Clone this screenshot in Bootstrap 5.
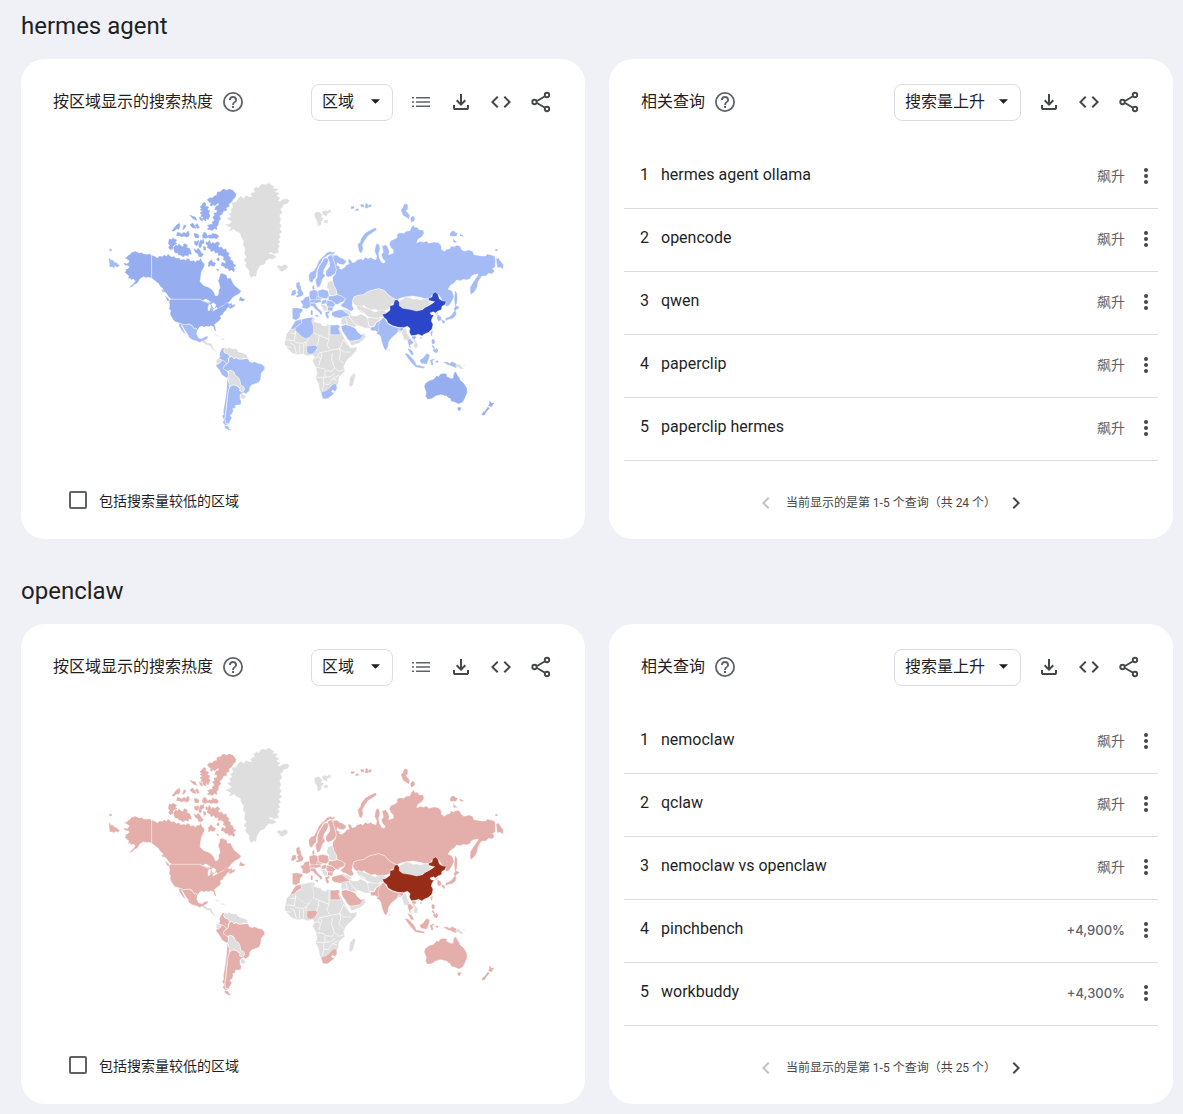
<!DOCTYPE html>
<html lang="zh-CN">
<head>
<meta charset="utf-8">
<meta name="viewport" content="width=device-width, initial-scale=1">
<title>搜索热度</title>
<link href="https://cdn.jsdelivr.net/npm/bootstrap@5.3.0/dist/css/bootstrap.min.css" rel="stylesheet">
<style>
body{background:#f0f1f7;color:#1f1f1f;font-family:Roboto,"Noto Sans CJK SC",sans-serif;font-size:16px;line-height:24px}
.page{padding:0 10px 10px 21px}
.topic{padding-top:10px}
.topic + .topic{margin-top:26px}
.topic-title{font-size:24px;line-height:32px;font-weight:400;margin-bottom:17px}
.panels{--bs-gutter-x:24px;--bs-gutter-y:24px}
.panel{border:0;border-radius:24px;min-height:480px;height:100%}
.panel-head{padding:24px 24px 0 32px}
.panel-head h3{font-size:16px;line-height:24px;font-weight:400}
.pick{width:auto;height:37px;border:1px solid #dadce0;border-radius:8px;padding:0 34px 2px 10px;margin-top:1px;color:#1f1f1f;font-size:16px;line-height:24px;
background-image:url("data:image/svg+xml,%3Csvg xmlns='http://www.w3.org/2000/svg' viewBox='0 0 10 5'%3E%3Cpath fill='%231f1f1f' d='M0 0h10L5 5z'/%3E%3C/svg%3E");background-size:9px 5px;background-position:right 12px top 14px}
.pick-area{min-width:82px}
.icon-btn{width:40px;height:36px;color:#444746}
.icon{width:24px;height:24px;fill:currentColor;display:block}
.soft{color:#5f6368}
.queries{margin:25px 15px 0}
.query{height:63px;padding:0 0 4px 16px;border-bottom:1px solid #dadce0}
.rank{width:21px}
.rise{font-size:14px;color:#5f6368;padding:2px 9px 0 0}
.rise-num{font-family:Inter,sans-serif;font-size:13px;font-weight:500}
.more{width:24px;height:24px;margin-top:2px;color:#444746}
.pager{font-size:12px;gap:8px;padding-top:30px;color:#444746}
.step{width:24px;height:24px;color:#444746}
.step:disabled{color:#c0c3c7;border:0;opacity:1}
.low{padding:5px 48px 0;font-size:14px;gap:12px}
.low label{padding-top:3px}
.low .form-check-input{width:18px;height:18px;border:2px solid #5f6368;border-radius:2px;margin:0}
.land{fill:var(--land);stroke:#fff;stroke-width:1.1;stroke-linejoin:round}
.north{fill:var(--north)}
.top{fill:var(--top)}
.none{fill:#dedede}
.kz{fill:var(--kz)}
.dz{fill:var(--dz)}
.isle{stroke:var(--land);stroke-width:1.6}
.north.isle{stroke:var(--north)}
.none.isle{stroke:#dedede}
.lines{fill:none;stroke:#fff;stroke-width:2}
.map-blue{--land:#a4bbf6;--north:#96aef0;--top:#2c46ca;--kz:#dedede;--dz:#a4bbf6}
.map-red{--land:#e4afaa;--north:#e4afaa;--top:#972c18;--kz:#e4afaa;--dz:#dedede}
</style>
<script src="https://cdn.jsdelivr.net/npm/bootstrap@5.3.0/dist/js/bootstrap.bundle.min.js"></script>
</head>
<body>
<svg width="0" height="0" class="position-absolute" aria-hidden="true">
<defs>
<symbol id="i-help" viewBox="0 0 24 24"><path d="M11 18h2v-2h-2zm1-16a10 10 0 1 0 0 20 10 10 0 0 0 0-20m0 18.200a8.200 8.200 0 1 1 0-16.400 8.200 8.200 0 0 1 0 16.400M12 6a4 4 0 0 0-4 4h1.900a2.100 2.100 0 1 1 4.200 0c0 2-3 1.750-3 5h1.900c0-2.250 3-2.500 3-5a4 4 0 0 0-4-4"/></symbol>
<symbol id="i-list" viewBox="0 0 24 24"><path d="M3 7h2v1.400H3zm4 0h14v1.400H7zM3 11.300h2v1.400H3zm4 0h14v1.400H7zM3 15.600h2V17H3zm4 0h14V17H7z"/></symbol>
<symbol id="i-down" viewBox="0 0 24 24"><path d="M12 16 7 11l1.400-1.450 2.600 2.600V4h2v8.150l2.600-2.600L17 11zM6 20q-.8 0-1.400-.6T4 18v-3h2v3h12v-3h2v3q0 .8-.6 1.400T18 20z"/></symbol>
<symbol id="i-code" viewBox="0 0 24 24"><path d="M9.400 16.600 4.800 12l4.600-4.600L8 6l-6 6 6 6zm5.200 0 4.600-4.600-4.600-4.600L16 6l6 6-6 6z"/></symbol>
<symbol id="i-share" viewBox="0 0 24 24"><path d="M8 11 16 6.200M8 13l8 4.800" stroke="currentColor" stroke-width="1.900"/><g fill="none" stroke="currentColor" stroke-width="1.900"><circle cx="5.500" cy="12" r="2.200"/><circle cx="18" cy="5" r="2.200"/><circle cx="18" cy="19" r="2.200"/></g></symbol>
<symbol id="i-more" viewBox="0 0 24 24"><circle cx="12" cy="6" r="2"/><circle cx="12" cy="12" r="2"/><circle cx="12" cy="18" r="2"/></symbol>
<symbol id="i-prev" viewBox="0 0 24 24"><path d="M15.400 7.400 14 6l-6 6 6 6 1.400-1.400-4.600-4.600z"/></symbol>
<symbol id="i-next" viewBox="0 0 24 24"><path d="M8.600 16.600 10 18l6-6-6-6-1.400 1.400 4.600 4.600z"/></symbol>

<g id="world">
<!-- North America -->
<g class="land" transform="translate(100 175) scale(.3333)">
<path class="isle" d="M28 249 32 256 38 256 42 262 50 264 58 272 52 276 46 272 42 278 36 274 30 276zM29 223l4-1 2 5-5 1z"/>
<path class="north" d="M155 240 148 236 140 238 130 236 124 232 118 234 105 228 99 232 95 231 90 238 85 240 80 246 72 248 80 252 88 258 86 262 80 266 74 263 71 266 76 272 84 272 88 276 82 282 76 282 78 288 74 292 80 298 86 302 84 312 90 310 94 315 100 312 106 318 98 328 86 338 98 335 102 329 112 325 120 312 130 305 138 308 146 307 155 310z"/>
<path class="north" d="M155 240 165 244 172 249 178 243 188 244 192 239 200 243 204 236 210 242 216 246 222 243 228 250 238 248 242 254 252 252 258 256 260 250 268 252 272 258 282 256 286 262 290 256 298 256 302 248 306 258 314 268 312 276 310 280 304 292 302 306 300 320 312 332 324 336 334 342 342 352 346 362 352 362 356 356 356 346 360 338 358 326 354 318 358 308 360 298 366 294 374 298 380 300 382 310 392 309 398 322 404 332 410 336 414 340 424 348 418 356 406 362 398 368 390 378 384 384 390 386 396 383 396 390 408 387 402 396 390 402 384 396 386 386 380 386 375 392 366 394 360 400 350 408 340 410 336 402 326 396 315 385 302 373 215 373 206 366 200 356 190 348 188 340 180 334 176 326 166 318 155 310z"/>
<path class="north isle" d="M422 366 418 376 430 378 434 373 427 371zM197 364l6 6 7 9-8-3zM187 344l4 8-5-5z"/>
<path class="north isle" d="M322 74 330 68 336 70 344 62 350 62 352 52 362 50 366 46 370 42 380 46 388 43 398 46 408 58 406 66 398 74 394 82 386 86 388 94 378 98 380 106 370 108 366 118 358 122 362 132 356 138 354 150 350 154 350 164 344 160 338 166 322 163 328 156 322 152 332 148 340 148 336 142 344 136 338 126 344 122 342 114 350 114 352 104 344 104 348 94 358 90 354 84 344 92 338 88 336 94 330 90 334 84 328 82z"/>
<path class="north isle" d="M306 90 312 82 318 86 316 94 326 96 322 104 330 108 326 114 330 122 324 134 318 128 318 138 308 132 310 126 302 124 306 118 300 114 308 108 300 104 306 100 300 96z"/>
<path class="north isle" d="M270 121 278 124 286 126 290 136 280 132zM298 126l8 4 2 8-6-2zM230 150l8-5 2 8-4 10-8-2-4 7-8 0 6-8zM252 150l6 2-4 8-6 4zM270 150l8-6 6 8 4 8-10-2zM286 150l6-4 6 12-6 2zM232 172l8 2 4 4 8-6 6 4 6-8 4 8-2 8-8 2-6-4-6 4-8-4-8 0zM282 176l8 0 6 4 0 8-10 0zM308 180l4-8 6 2 4 10 6-4 8 0 2-6 6 4 4-2 8 8-4 6-12-1-8 1-8-3-8 3-8-2z"/>
<path class="north isle" d="M208 192 214 194 218 190 230 195 226 202 230 206 222 210 218 214 220 220 212 224 206 219 210 210 205 206zM222 216 228 210 234 214 236 207 244 214 250 216 252 206 262 210 260 218 268 220 272 228 274 238 266 236 264 244 256 240 250 246 242 240 236 240 234 234 226 234 222 226zM284 198l6 2 6-4 0 10-6 6-6-4zM302 194l4 4 4-6 2 12-6 2-2 8-4 6-4-8zM282 222l8 4 4-6 6 6 4 8 6 4-6 8-8-2-2-8-8-4zM310 214l6 2 2 8-6 2z"/>
<path class="north isle" d="M318 200 324 204 328 196 334 208 338 202 344 206 352 200 360 206 354 212 358 218 364 216 370 224 378 222 380 230 388 236 384 242 392 248 390 254 398 258 400 266 408 272 400 276 404 284 402 290 394 284 388 288 384 280 376 280 372 274 364 272 366 262 376 266 378 258 370 254 372 246 362 240 356 242 354 232 346 234 342 226 334 230 330 222 322 218 324 210 318 208zM326 262l8-8 4 8 8 2-2 8-6 2-6-4-6 6zM350 252l6-4 2 6-4 4zM350 282l6 2-2 4z"/>
</g>
<g class="land" transform="translate(120 290) scale(.3333)">
<path class="north" d="M152 28 240 28 246 32 258 38 270 42 276 56 288 58 300 52 312 46 320 38 326 40 332 48 322 54 318 62 312 66 308 74 300 78 304 84 298 92 290 98 283 104 286 112 289 124 284 122 280 110 272 107 266 110 258 109 252 112 246 108 238 112 232 122 228 114 222 116 216 106 208 102 190 104 176 98 166 96 160 90 154 80 150 72 152 62 147 56 149 44 147 32z"/>
<path fill="#fff" d="M248 31l10-4 10 6 4 4-10 0-4-2zM264 62l0-12 4-8 4 4-2 14zM274 42l6-4 8 6-4 10-6-2zM278 60l12-8 2 3-12 8z"/>
<path d="M176 99 190 104 208 103 216 107 222 116 228 114 232 122 230 132 236 144 246 146 254 140 265 138 262 146 254 150 250 156 244 154 240 158 230 153 216 149 206 142 204 134 194 120 186 106 184 106 190 118 197 132 192 130 186 122 178 110z"/>
<path class="none" d="M246 156 254 151 262 158 274 160 278 170 284 180 292 182 288 184 278 180 270 168 258 164zM280 132l12 3 10 6-10-2zM303 144l14 4-6 2-8-2zM45 145l3 1-2 2z"/>
<path d="M308 173 302 182 298 192 300 200 296 206 304 210 314 214 321 222 325 216 324 206 330 200 326 192 314 189 311 182 314 174z"/>
<path class="none" d="M314 172 322 176 326 172 336 176 350 177 356 186 370 190 382 196 384 204 372 204 364 207 354 206 348 202 340 206 336 198 328 200 324 192 314 188 311 181z"/>
<path class="none" d="M296 206 305 210 302 216 294 222 288 218 290 208z"/>
<path d="M290 222 294 223 302 217 305 210 314 214 320 222 312 228 310 236 320 242 324 248 326 260 320 264 306 255 298 240 288 228z"/>
<path d="M328 203 336 199 341 206 350 204 356 208 366 208 378 206 384 206 388 214 396 218 404 215 414 220 426 223 434 230 434 238 424 250 422 266 418 276 404 282 396 284 390 290 388 302 378 312 368 306 374 298 370 290 362 286 360 274 356 264 346 256 342 246 332 240 322 244 310 236 313 228 321 222 326 216z"/>
<path class="none" d="M326 245 332 241 341 246 346 256 357 264 361 276 361 284 372 290 374 298 366 306 358 300 360 294 348 286 340 284 332 290 328 282 324 264zM362 312l6 0 10 8-6 7-11-2z"/>
<path d="M330 290 340 285 350 288 360 296 358 302 366 306 372 300 368 308 360 314 360 326 364 334 362 344 346 346 346 354 338 356 340 362 336 372 330 376 336 384 332 390 326 402 316 400 315 384 318 366 320 346 322 326 324 306z"/>
<path d="M322 264 328 282 328 292 324 306 321 326 319 346 317 366 314 384 316 400 326 403 316 406 308 398 312 390 306 378 311 374 310 364 313 346 317 322 320 296zM314 406l10 2 4 8 8 4-10 1-12-8z"/>
</g>
<g class="land" transform="translate(200 175) scale(.3333)">
<path class="none isle" d="M116 70 122 64 132 72 138 62 146 66 158 66 152 58 160 52 166 54 162 42 170 36 176 40 184 28 196 30 206 25 214 30 222 34 216 40 234 43 224 50 238 56 228 62 240 70 232 76 240 80 248 74 262 72 268 78 260 86 250 88 248 96 240 102 246 112 238 122 242 134 238 144 244 152 238 162 246 170 236 178 242 186 234 192 240 202 232 206 238 214 232 222 236 232 222 236 210 230 206 236 220 240 228 246 216 252 208 250 200 256 192 268 182 270 176 278 170 288 168 304 160 302 154 308 148 298 148 286 136 272 140 264 132 256 140 246 134 236 136 220 130 210 132 198 124 186 122 174 108 168 102 162 88 168 94 158 78 150 90 146 96 140 82 130 94 126 88 116 98 112 92 104 100 96 96 84 108 82zM232 274l8-3 4 4 10-6 8 4 0 6-14 10-10-3 4-5-8-1z"/>
</g>
<!-- Europe and northern Asia -->
<g class="land" transform="translate(280 190) scale(.3333)">
<path class="none isle" d="M104 70 112 66 120 68 126 76 122 84 130 84 124 94 122 104 114 108 112 92 106 84zM126 66l8-4 8 2 8-5 2 7-10 4-2 8-10-4zM132 92l10-2 0 8-8 0z"/>
<path class="isle" d="M238 184 236 172 234 164 242 156 244 146 256 130 270 122 286 114 289 119 276 128 264 136 254 150 246 164 248 178 244 188zM214 50l8 0 0 4-8 2zM226 60l8-4 2 4-8 2zM242 44l8 0 2 6-8 0zM258 40l6 4-2 10-6 0zM266 46l8-2-2 6-6 2zM364 60l6-8 4-10 8 2 0 14-6 4 6 6 6 8-2 10-8-6-8-4zM392 86l6-8 6 6-2 8-8 4zM510 132l6-8 6 0 4 4 6 2-4 8-16 0zM540 132l10 6-8 0zM520 148l4 4 6 4-8 1zM646 178l8 2-6 3zM526 304l4 6 0 20-4 18-2-20z"/>
<path d="M160 196 172 196 178 202 186 204 198 212 198 218 190 224 178 222 172 218 170 226 180 230 178 236 186 238 196 230 200 224 208 222 204 214 206 206 213 210 216 218 226 216 230 210 244 206 248 211 256 202 264 206 272 202 278 206 288 209 290 198 284 184 286 170 290 160 298 164 300 176 296 190 298 204 304 216 312 220 316 214 308 206 304 194 310 186 306 168 318 164 324 174 328 184 326 194 340 190 340 180 332 172 328 162 332 152 346 146 352 142 350 134 358 128 372 130 378 124 390 122 394 112 402 104 404 112 412 112 418 120 430 120 432 130 426 140 414 148 410 158 422 154 430 157 440 153 446 160 462 156 476 158 484 168 484 178 494 184 500 178 510 176 512 168 522 170 530 166 540 168 544 178 552 184 566 180 578 184 582 194 592 196 606 198 618 198 620 192 636 196 644 198 646 206 646 230 638 236 644 244 636 252 626 250 618 258 606 258 600 266 594 276 592 290 586 302 574 314 570 306 571 290 580 276 588 264 594 256 594 252 582 254 574 258 570 266 560 270 550 268 542 272 530 270 524 278 512 286 504 298 512 300 518 306 522 320 516 334 508 346 500 350 494 342 498 338 488 338 484 326 476 314 464 308 456 316 450 324 436 326 420 322 400 318 380 320 362 324 350 330 335 322 322 312 314 302 296 296 280 300 266 304 250 314 236 316 222 320 218 332 216 346 222 358 212 364 200 356 188 352 182 346 192 336 196 326 184 318 172 314 168 298 162 288 158 272 158 262 166 252 169 240 164 220 159 206zM648 206l8-2 6 10 8 10 0 14-10-6-8 2z"/>
<path d="M86 256 92 246 102 242 110 228 116 214 124 204 134 196 140 188 152 184 156 188 164 184 164 190 158 194 148 193 138 200 130 204 122 220 114 232 110 246 108 262 102 268 96 278 88 274z"/>
<path d="M112 262 112 244 118 228 126 216 132 205 142 203 146 212 140 226 132 238 130 250 136 258 128 266 124 278 120 288 112 294 108 280 106 270z"/>
<path d="M142 201 150 196 158 195 159 206 164 220 169 240 164 252 154 258 144 262 138 256 138 244 150 228 148 214z"/>
<path class="none" d="M144 276 157 271 162 288 168 298 171 313 158 318 146 313 147 300 140 292z"/>
<path d="M145 318 158 318 172 314 184 318 196 326 192 334 180 338 174 344 166 342 158 334 145 330zM113 302l15-4 16 4 3 14-6 10-16-1-10-5zM88 304l12-5 14 4 1 17-4 10-18 1-5-10zM96 290l6-6 2 12-6 5zM60 332l9-1 5-9 14-4 2 14 3 4-2 15-11 6-14-4 2-9zM37 354l15 0 14 2 3 6-8 8-2 13-11 8-11-4z"/>
<path class="isle" d="M50 280l8-3 0 8 4 4 0 8 8 14-4 6-14 4-4-2 8-5-4-8 4-4-6-10zM38 302l8-2 2 10-6 6-8 0zM106 376l8 0-1 5zM93 362l4 0 0 12-4 0z"/>
<path d="M90 340l14-3 4 8 6 10 11 9 2 8-5 3-5-9-12-9-6-8-8-1zM88 331l16-2 17-3 3 10-18 4-16-1zM110 320l16 3-2 6-14 0zM123 334l15-6 4 10-16 6zM140 330l17 4 9 9-6 9-17-2-5-9zM143 350l17 1-3 12-14-1zM135 367l15-5-2 8-5 2 5 9-6 5-5-8z"/>
<path class="none" d="M121 343l14 1 7 8-1 10-8 2-4-9z"/>
<path d="M156 366 172 361 190 358 208 363 213 374 206 380 184 385 164 382 155 375z"/>
<path class="kz" d="M218 332 222 320 236 316 250 314 266 304 280 300 296 296 314 302 322 312 335 322 350 330 344 340 332 344 334 354 318 360 300 366 286 358 272 360 258 352 250 346 246 356 240 350 230 348 222 342z"/>
</g>
<!-- Africa and the Middle East -->
<g class="land" transform="translate(275 290) scale(.3333)">
<path class="none" d="M202 60 214 62 226 68 232 72 222 74 212 68zM244 52 250 46 266 52 284 58 300 66 318 60 330 62 336 74 330 80 318 82 304 86 294 84 280 80 268 72 256 66zM222 72 234 78 246 78 258 72 274 80 280 92 280 104 288 114 270 114 256 108 246 106 234 96 226 86zM276 84 292 82 304 86 320 80 314 90 302 98 296 110 282 108 280 96zM200 82 222 78 234 96 246 106 240 112 226 108 212 102 200 106 198 96z"/>
<path d="M286 112 298 110 304 98 314 92 322 84 332 92 324 104 318 112 320 122 310 128 302 122 288 122zM198 108l14-4 14 4 14 6 8 12 10 8 12-2-4 14-12 4-14 2-14 2-8-6-8-14-8-10z"/>
<path class="none" d="M222 153 238 153 256 148 264 136 273 138 268 148 252 160 230 167z"/>
<path class="none" d="M62 92 78 88 96 84 114 81 120 86 117 94 128 98 138 100 142 107 154 108 156 102 166 105 178 106 188 104 195 109 192 116 198 126 206 140 212 152 222 166 226 174 246 171 244 182 232 196 220 206 212 216 206 230 210 244 198 254 192 262 190 278 182 298 172 312 156 326 144 326 140 318 134 300 130 280 122 264 126 248 122 232 113 214 118 200 112 193 100 198 84 192 66 194 50 188 38 176 28 162 32 146 34 132 46 118 54 104zM225 262l13-14 4 8-8 28-7 8-5-8z"/>
<path class="lines" d="M62 122V130H46M62 124 58 152 34 150M58 152 64 158 82 160 94 156 104 142M94 156 92 168M115 128 132 136 162 148V106M117 94 112 98M132 136 130 156 124 168M162 148 156 166 164 178M162 134H198M206 148 194 176 172 180 156 184 134 188 128 198M120 186 129 172M194 176 206 186 228 186M206 148 214 160 228 174M194 176 197 190 192 208 206 220M172 190 170 208 178 232 192 244 206 240M124 232 146 236 152 242 172 244 178 232M150 242V262H124M150 262 166 260 180 250M146 264V284L142 302M146 282 160 284 172 266 186 270M172 266 192 256M136 208 132 226M116 204 132 200 137 208M46 160 58 166 64 192M74 164V190M86 162V190M30 168 48 172M138 188 140 200 136 208M250 76 256 60 272 72M212 84 218 104"/>
<path d="M62 92 78 88 80 100 66 108 60 116 46 118 54 104zM166 105l12 1 10-2 7 5-4 8 6 17-31 0zM96 168l24-2 9 6-9 14-9 6-12 0-4-10zM139 306l12-3 10-6 6-8 9-7 8 0 2 14-12 18-16 12-14 0-3-8z"/>
<path class="dz" d="M80 88 96 84 114 82 110 94 115 108 115 128 104 142 92 146 78 138 60 120 62 112 80 100z"/>
<path fill="#fff" d="M169 304l5-4 5 4-5 5z"/>
</g>
<!-- Southern and eastern Asia, Oceania -->
<g class="land" transform="translate(370 285) scale(.3333)">
<path class="none" d="M90 46 100 42 108 35 120 38 128 43 140 42 150 45 162 42 176 42 178 50 186 52 176 62 164 68 156 75 140 79 118 74 98 71 88 62z"/>
<path class="top" d="M37 88 46 86 52 82 60 76 60 62 70 60 74 46 82 44 88 52 88 62 98 70 118 73 140 78 158 74 164 68 176 62 186 56 194 50 184 48 176 46 176 40 186 36 188 26 196 21 204 28 208 42 218 48 229 49 224 60 216 64 214 74 204 78 196 84 190 80 180 84 184 90 192 90 186 100 184 108 189 118 186 132 176 142 162 148 156 153 146 148 136 151 124 152 118 142 120 130 112 124 100 128 84 127 68 122 54 114 50 104 42 98zM150 158l5-1-2 5z"/>
<path d="M30 110 38 98 44 100 50 110 56 118 68 124 82 128 90 130 98 126 100 134 92 142 84 140 80 146 70 154 62 162 56 172 54 186 48 197 42 190 36 174 32 156 28 150 20 146 26 136 24 122z"/>
<path class="none" d="M56 190l5 4-2 6-4-2zM84 134l8 2 0 8-6-2zM95 142l5-8 7-4 4 8 2 10 6 8-2 10 4 12-6-4-4-10-8 2-4-12zM124 160l8 0 8 12 4 6-2 10-8 2-4-8 4-8z"/>
<path d="M113 166 120 160 126 168 132 172 126 178 121 180 124 192 118 186 114 174zM126 154l8-2 6 4-6 8-8-4z"/>
<path class="isle" d="M114 192l8 2 6 8 2 8-6-2zM106 206l8 2 12 12 8 10 4 10-6 0-14-16zM134 241l14 1 16 5-4 2-24-4zM150 226l10-6 10-14 8 4-2 10-6 16-16-2zM181 226l12-4-7 6 3 12-4 0zM186 164l6 0 2 8-4 6-4-4zM190 192l6 2 4-4 4 8-4 5-8-3zM186 182l4 0 4 8-4-1zM182 144l5-6-2 14zM204 90l8 6 2 8-8 4-4-8zM258 62l10 6-8 4-4 6-4-6zM254 78l4 4-2 10-8 8-12 2-8 4 0-6 10-4 8-6zM216 106l8 2-2 8-4-4zM257 30l3 4-1 22-3-10zM198 228l6 0 0 4-6-1zM222 232l10 0 6 4 8-5 12 5 0 12-10-4-8-4-4 0z"/>
<path class="none" d="M194 86 206 79 204 88 198 93zM258 236l10 2 6 6 8 8-10 0-6-5-8 1zM276 240l10-2-3 5z"/>
<path class="north isle" d="M166 296 178 288 190 284 196 278 200 273 206 276 212 268 220 266 230 268 228 274 236 278 246 282 251 278 252 266 257 261 262 272 266 276 270 286 280 294 290 310 290 324 284 338 278 350 266 356 254 350 244 348 242 340 236 338 230 332 212 328 196 332 186 340 172 341 168 334 170 322 164 306zM263 368l10 0-3 8-5 0zM359 348l4 6 8 1-7 10-8-3 3-6zM354 366l4 4-10 11-4 8-8 1 2-6 8-6z"/>
</g>
</g>
</defs>
</svg>

<main class="page">
<section class="topic">
<h2 class="topic-title">hermes agent</h2>
<div class="row row-cols-1 row-cols-md-2 panels">
<div class="col"><div class="card panel">
<div class="panel-head d-flex align-items-center">
<h3 class="mb-0">按区域显示的搜索热度</h3>
<button class="btn p-0 border-0 ms-2 soft" aria-label="帮助"><svg class="icon"><use href="#i-help"/></svg></button>
<select class="form-select pick pick-area ms-auto me-2" aria-label="范围"><option>区域</option></select>
<button class="btn p-0 border-0 icon-btn soft d-flex align-items-center justify-content-center" aria-label="列表"><svg class="icon"><use href="#i-list"/></svg></button>
<button class="btn p-0 border-0 icon-btn d-flex align-items-center justify-content-center" aria-label="下载"><svg class="icon"><use href="#i-down"/></svg></button>
<button class="btn p-0 border-0 icon-btn d-flex align-items-center justify-content-center" aria-label="嵌入"><svg class="icon"><use href="#i-code"/></svg></button>
<button class="btn p-0 border-0 icon-btn d-flex align-items-center justify-content-center" aria-label="分享"><svg class="icon"><use href="#i-share"/></svg></button>
</div>
<svg class="w-100 map-blue" viewBox="21 121 564 360" role="img" aria-label="地图"><use href="#world"/></svg>
<div class="low d-flex align-items-center"><input class="form-check-input" type="checkbox" id="low-a"><label for="low-a">包括搜索量较低的区域</label></div>
</div></div>
<div class="col"><div class="card panel">
<div class="panel-head d-flex align-items-center">
<h3 class="mb-0">相关查询</h3>
<button class="btn p-0 border-0 ms-2 soft" aria-label="帮助"><svg class="icon"><use href="#i-help"/></svg></button>
<select class="form-select pick ms-auto me-2" aria-label="排序"><option>搜索量上升</option></select>
<button class="btn p-0 border-0 icon-btn d-flex align-items-center justify-content-center" aria-label="下载"><svg class="icon"><use href="#i-down"/></svg></button>
<button class="btn p-0 border-0 icon-btn d-flex align-items-center justify-content-center" aria-label="嵌入"><svg class="icon"><use href="#i-code"/></svg></button>
<button class="btn p-0 border-0 icon-btn d-flex align-items-center justify-content-center" aria-label="分享"><svg class="icon"><use href="#i-share"/></svg></button>
</div>
<ul class="list-unstyled queries">
<li class="query d-flex align-items-center"><span class="rank">1</span><a href="#" class="text-reset text-decoration-none me-auto">hermes agent ollama</a><span class="rise">飙升</span><button class="btn p-0 border-0 more" aria-label="更多"><svg class="icon"><use href="#i-more"/></svg></button></li>
<li class="query d-flex align-items-center"><span class="rank">2</span><a href="#" class="text-reset text-decoration-none me-auto">opencode</a><span class="rise">飙升</span><button class="btn p-0 border-0 more" aria-label="更多"><svg class="icon"><use href="#i-more"/></svg></button></li>
<li class="query d-flex align-items-center"><span class="rank">3</span><a href="#" class="text-reset text-decoration-none me-auto">qwen</a><span class="rise">飙升</span><button class="btn p-0 border-0 more" aria-label="更多"><svg class="icon"><use href="#i-more"/></svg></button></li>
<li class="query d-flex align-items-center"><span class="rank">4</span><a href="#" class="text-reset text-decoration-none me-auto">paperclip</a><span class="rise">飙升</span><button class="btn p-0 border-0 more" aria-label="更多"><svg class="icon"><use href="#i-more"/></svg></button></li>
<li class="query d-flex align-items-center"><span class="rank">5</span><a href="#" class="text-reset text-decoration-none me-auto">paperclip hermes</a><span class="rise">飙升</span><button class="btn p-0 border-0 more" aria-label="更多"><svg class="icon"><use href="#i-more"/></svg></button></li>
</ul>
<div class="pager d-flex align-items-center justify-content-center"><button class="btn p-0 border-0 step" disabled aria-label="上一页"><svg class="icon"><use href="#i-prev"/></svg></button><span>当前显示的是第 1-5 个查询（共 24 个）</span><button class="btn p-0 border-0 step" aria-label="下一页"><svg class="icon"><use href="#i-next"/></svg></button></div>
</div></div>
</div>
</section>

<section class="topic">
<h2 class="topic-title">openclaw</h2>
<div class="row row-cols-1 row-cols-md-2 panels">
<div class="col"><div class="card panel">
<div class="panel-head d-flex align-items-center">
<h3 class="mb-0">按区域显示的搜索热度</h3>
<button class="btn p-0 border-0 ms-2 soft" aria-label="帮助"><svg class="icon"><use href="#i-help"/></svg></button>
<select class="form-select pick pick-area ms-auto me-2" aria-label="范围"><option>区域</option></select>
<button class="btn p-0 border-0 icon-btn soft d-flex align-items-center justify-content-center" aria-label="列表"><svg class="icon"><use href="#i-list"/></svg></button>
<button class="btn p-0 border-0 icon-btn d-flex align-items-center justify-content-center" aria-label="下载"><svg class="icon"><use href="#i-down"/></svg></button>
<button class="btn p-0 border-0 icon-btn d-flex align-items-center justify-content-center" aria-label="嵌入"><svg class="icon"><use href="#i-code"/></svg></button>
<button class="btn p-0 border-0 icon-btn d-flex align-items-center justify-content-center" aria-label="分享"><svg class="icon"><use href="#i-share"/></svg></button>
</div>
<svg class="w-100 map-red" viewBox="21 121 564 360" role="img" aria-label="地图"><use href="#world"/></svg>
<div class="low d-flex align-items-center"><input class="form-check-input" type="checkbox" id="low-b"><label for="low-b">包括搜索量较低的区域</label></div>
</div></div>
<div class="col"><div class="card panel">
<div class="panel-head d-flex align-items-center">
<h3 class="mb-0">相关查询</h3>
<button class="btn p-0 border-0 ms-2 soft" aria-label="帮助"><svg class="icon"><use href="#i-help"/></svg></button>
<select class="form-select pick ms-auto me-2" aria-label="排序"><option>搜索量上升</option></select>
<button class="btn p-0 border-0 icon-btn d-flex align-items-center justify-content-center" aria-label="下载"><svg class="icon"><use href="#i-down"/></svg></button>
<button class="btn p-0 border-0 icon-btn d-flex align-items-center justify-content-center" aria-label="嵌入"><svg class="icon"><use href="#i-code"/></svg></button>
<button class="btn p-0 border-0 icon-btn d-flex align-items-center justify-content-center" aria-label="分享"><svg class="icon"><use href="#i-share"/></svg></button>
</div>
<ul class="list-unstyled queries">
<li class="query d-flex align-items-center"><span class="rank">1</span><a href="#" class="text-reset text-decoration-none me-auto">nemoclaw</a><span class="rise">飙升</span><button class="btn p-0 border-0 more" aria-label="更多"><svg class="icon"><use href="#i-more"/></svg></button></li>
<li class="query d-flex align-items-center"><span class="rank">2</span><a href="#" class="text-reset text-decoration-none me-auto">qclaw</a><span class="rise">飙升</span><button class="btn p-0 border-0 more" aria-label="更多"><svg class="icon"><use href="#i-more"/></svg></button></li>
<li class="query d-flex align-items-center"><span class="rank">3</span><a href="#" class="text-reset text-decoration-none me-auto">nemoclaw vs openclaw</a><span class="rise">飙升</span><button class="btn p-0 border-0 more" aria-label="更多"><svg class="icon"><use href="#i-more"/></svg></button></li>
<li class="query d-flex align-items-center"><span class="rank">4</span><a href="#" class="text-reset text-decoration-none me-auto">pinchbench</a><span class="rise rise-num">+4,900%</span><button class="btn p-0 border-0 more" aria-label="更多"><svg class="icon"><use href="#i-more"/></svg></button></li>
<li class="query d-flex align-items-center"><span class="rank">5</span><a href="#" class="text-reset text-decoration-none me-auto">workbuddy</a><span class="rise rise-num">+4,300%</span><button class="btn p-0 border-0 more" aria-label="更多"><svg class="icon"><use href="#i-more"/></svg></button></li>
</ul>
<div class="pager d-flex align-items-center justify-content-center"><button class="btn p-0 border-0 step" disabled aria-label="上一页"><svg class="icon"><use href="#i-prev"/></svg></button><span>当前显示的是第 1-5 个查询（共 25 个）</span><button class="btn p-0 border-0 step" aria-label="下一页"><svg class="icon"><use href="#i-next"/></svg></button></div>
</div></div>
</div>
</section>
</main>
</body>
</html>
